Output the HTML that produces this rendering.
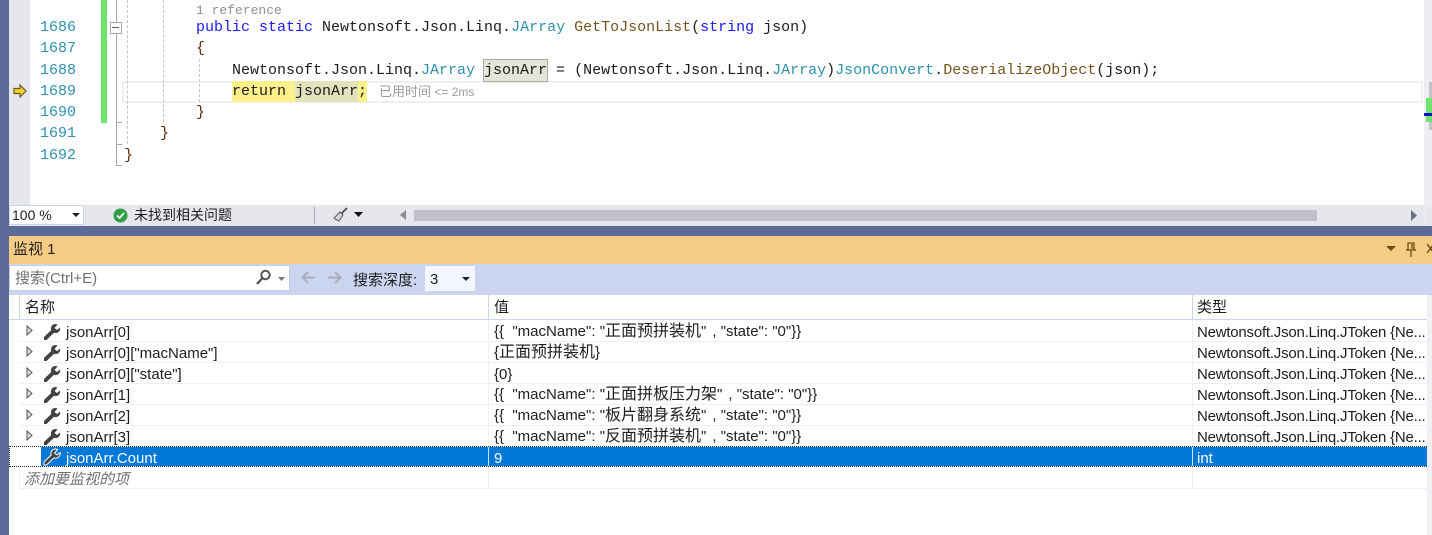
<!DOCTYPE html>
<html><head><meta charset="utf-8">
<style>
html,body{margin:0;padding:0;width:1432px;height:535px;overflow:hidden;background:#fff}
#r{position:relative;width:1432px;height:535px;overflow:hidden;font-family:"Liberation Sans","Noto Sans CJK SC",sans-serif}
#r div,#r span.a,#r svg{position:absolute}
.m{font-family:"Liberation Mono",monospace;font-size:15px;line-height:21px;white-space:pre;color:#1c1c1c}
.n{color:#2b91af;left:40px}
.k{color:#1a1aff}.t{color:#2b91af}.f{color:#74531f}.b{color:#5a2a0c}
.s{font-size:15px;line-height:21px;white-space:pre;color:#1e1e1e}
.s i{font-style:normal;font-size:16px;letter-spacing:0}
.s u{text-decoration:none;display:inline-block;width:6px}
.y{letter-spacing:-.22px}
.l{left:20px;width:1407px;height:1px;background:#eeeff2}
.dv{width:0;border-left:1px dashed #c4c4c4}
</style></head><body><div id="r">
<div style="left:0;top:0;width:9px;height:535px;background:#5c6a98"></div>
<div style="left:9px;top:0;width:21px;height:205px;background:#e6e7ec"></div>
<div style="left:1424px;top:0;width:8px;height:205px;background:#eeeef2"></div>
<div style="left:1429px;top:82px;width:3px;height:48px;background:#c2c3c9"></div>
<div style="left:1426px;top:98px;width:6px;height:24px;background:#6fe36f"></div>
<div style="left:1424px;top:113px;width:8px;height:3px;background:#1010c8"></div>

<!-- current line box -->
<div style="left:122px;top:81px;width:1297px;height:18px;border:2px solid #eeeef5"></div>
<div style="left:232px;top:81px;width:135px;height:21px;background:#fff08c"></div>
<div style="left:295px;top:81px;width:63px;height:21px;background:#e2e2bc"></div>
<div style="left:483px;top:59px;width:63px;height:21px;background:#e2e6d8;border:1px solid #a9ad9f"></div>

<!-- green bar & outlining -->
<div style="left:101px;top:0;width:6px;height:123px;background:#6fe36f"></div>
<div style="left:116px;top:0;width:1px;height:165px;background:#a8a8a8"></div>
<div style="left:116px;top:122px;width:6px;height:1px;background:#a8a8a8"></div>
<div style="left:116px;top:144px;width:6px;height:1px;background:#a8a8a8"></div>
<div style="left:116px;top:165px;width:6px;height:1px;background:#a8a8a8"></div>
<div style="left:110px;top:22px;width:10px;height:10px;background:#fff;border:1px solid #a8a8a8"></div>
<div style="left:112px;top:27px;width:7px;height:1px;background:#555"></div>
<div class="dv" style="left:127px;top:0;height:144px"></div>
<div class="dv" style="left:163px;top:0;height:122px"></div>
<div class="dv" style="left:199px;top:59px;height:43px"></div>

<!-- arrow -->
<svg style="left:13px;top:84px" width="14" height="14" viewBox="0 0 14 14"><path d="M1 4.5H7V1L13 7 7 13V9.5H1Z" fill="#f8d12f" stroke="#6b5a26" stroke-width="1.2"/></svg>

<!-- line numbers -->
<div class="m n" style="top:17px">1686</div>
<div class="m n" style="top:38px">1687</div>
<div class="m n" style="top:60px">1688</div>
<div class="m n" style="top:81px">1689</div>
<div class="m n" style="top:102px">1690</div>
<div class="m n" style="top:123px">1691</div>
<div class="m n" style="top:145px">1692</div>

<!-- code -->
<div class="m" style="left:196px;top:0;color:#8f8f8f;font-size:13px">1 reference</div>
<div class="m" style="left:196px;top:17px"><span class="k">public static</span> Newtonsoft.Json.Linq.<span class="t">JArray</span> <span class="f">GetToJsonList</span>(<span class="k">string</span> json)</div>
<div class="m b" style="left:196px;top:38px">{</div>
<div class="m" style="left:232px;top:60px">Newtonsoft.Json.Linq.<span class="t">JArray</span> jsonArr = (Newtonsoft.Json.Linq.<span class="t">JArray</span>)<span class="t">JsonConvert</span>.<span class="f">DeserializeObject</span>(json);</div>
<div class="m" style="left:232px;top:81px"><span class="k" style="color:#1c1c1c">return</span> jsonArr;</div>
<div class="s" style="left:379px;top:81px;color:#9a9a9a;font-size:12px"><i style="font-size:13px">已用时间</i> &lt;= 2ms</div>
<div class="m b" style="left:196px;top:102px">}</div>
<div class="m b" style="left:160px;top:123px">}</div>
<div class="m b" style="left:124px;top:145px">}</div>

<!-- status bar -->
<div style="left:9px;top:205px;width:1423px;height:21px;background:#e6e7ed"></div>
<div style="left:9px;top:205px;width:75px;height:20px;background:#fff;border:1px solid #ccd5f0;box-sizing:border-box"></div>
<div class="s" style="left:12px;top:205px;font-size:14px">100 %</div>
<svg style="left:72px;top:213px" width="8" height="5"><path d="M0 0H8L4 4Z" fill="#222"/></svg>
<svg style="left:113px;top:208px" width="15" height="15" viewBox="0 0 15 15"><circle cx="7.5" cy="7.5" r="7" fill="#2f9e44"/><path d="M4 7.5 6.6 10 11 5" fill="none" stroke="#fff" stroke-width="1.8"/></svg>
<div class="s" style="left:134px;top:205px;font-size:14px">未找到相关问题</div>
<div style="left:314px;top:207px;width:1px;height:17px;background:#a8a8b0"></div>
<svg style="left:333px;top:207px" width="16" height="16" viewBox="0 0 16 16"><path d="M14 1 8 7" stroke="#444" stroke-width="1.6"/><path d="M7 5 10 8 6 14 2 12 1 11Z" fill="#d8d8d8" stroke="#555"/></svg>
<svg style="left:354px;top:212px" width="9" height="6"><path d="M0 0H9L4.5 5Z" fill="#111"/></svg>
<svg style="left:400px;top:210px" width="6" height="11"><path d="M6 0V10L0 5Z" fill="#8b8c95"/></svg>
<div style="left:414px;top:210px;width:903px;height:11px;background:#c0c1c8"></div>
<svg style="left:1411px;top:210px" width="7" height="11"><path d="M0 0V11L6 5.500Z" fill="#6d7080"/></svg>
<div style="left:1424px;top:205px;width:1px;height:21px;background:#eeeef2"></div>

<!-- blue band -->
<div style="left:9px;top:226px;width:1423px;height:10px;background:#5c6a98"></div>
<!-- orange header -->
<div style="left:9px;top:236px;width:1423px;height:28px;background:#f5cc84"></div>
<div class="s" style="left:13px;top:239px;font-size:15px;color:#222">监视 1</div>
<svg style="left:1386px;top:246px" width="10" height="6"><path d="M0 0H10L5 5Z" fill="#6b4e16"/></svg>
<svg style="left:1406px;top:242px" width="10" height="15" viewBox="0 0 10 15"><path d="M2 1H8V8H2ZM0 8H10M5 8V15M6 2V7" fill="none" stroke="#6b4e16" stroke-width="1.3"/></svg>
<svg style="left:1427px;top:243px" width="5" height="11"><path d="M0 1 7 10M7 1 0 10" stroke="#6b4e16" stroke-width="1.4"/></svg>

<!-- toolbar -->
<div style="left:9px;top:264px;width:1423px;height:31px;background:#ccd5f0"></div>
<div style="left:9px;top:265px;width:281px;height:26px;background:#fff;border:1px solid #c4cee8;box-sizing:border-box"></div>
<div class="s" style="left:15px;top:268px;color:#717171;font-size:15px;line-height:22px">搜索(Ctrl+E)</div>
<svg style="left:255px;top:269px" width="17" height="17" viewBox="0 0 17 17"><circle cx="10.5" cy="6" r="4.2" fill="none" stroke="#555" stroke-width="2"/><path d="M7.5 9 2 15" stroke="#555" stroke-width="2.4"/></svg>
<svg style="left:278px;top:277px" width="7" height="4"><path d="M0 0H7L3.500 4Z" fill="#777"/></svg>
<svg style="left:301px;top:271px" width="15" height="13" viewBox="0 0 15 13"><path d="M14 6.500H2M7 1 1.500 6.500 7 12" fill="none" stroke="#a9aebd" stroke-width="2"/></svg>
<svg style="left:327px;top:271px" width="15" height="13" viewBox="0 0 15 13"><path d="M1 6.500H13M8 1 13.500 6.500 8 12" fill="none" stroke="#a9aebd" stroke-width="2"/></svg>
<div class="s" style="left:353px;top:270px;font-size:15px">搜索深度:</div>
<div style="left:425px;top:266px;width:50px;height:25px;background:#f3f6fe"></div>
<div class="s" style="left:430px;top:269px">3</div>
<svg style="left:462px;top:277px" width="8" height="5"><path d="M0 0H8L4 4Z" fill="#222"/></svg>

<!-- grid -->
<div style="left:9px;top:295px;width:1418px;height:240px;background:#fff"></div>
<div style="left:1427px;top:295px;width:5px;height:240px;background:#f0f0f4"></div>
<div style="left:9px;top:319px;width:1418px;height:1px;background:#ccd5f0"></div>
<div style="left:19px;top:295px;width:1px;height:24px;background:#ccd5f0"></div>
<div style="left:488px;top:295px;width:1px;height:24px;background:#ccd5f0"></div>
<div style="left:1192px;top:295px;width:1px;height:24px;background:#ccd5f0"></div>
<div class="s" style="left:25px;top:297px;font-size:15px">名称</div>
<div class="s" style="left:494px;top:297px;font-size:15px">值</div>
<div class="s" style="left:1197px;top:297px;font-size:15px">类型</div>

<div class="l" style="top:341px"></div>
<div class="l" style="top:362px"></div>
<div class="l" style="top:383px"></div>
<div class="l" style="top:404px"></div>
<div class="l" style="top:425px"></div>
<div class="l" style="top:488px"></div>
<div style="left:488px;top:320px;width:1px;height:169px;background:#eeeff2"></div>
<div style="left:1192px;top:320px;width:1px;height:169px;background:#eeeff2"></div>
<div style="left:19px;top:467px;width:1px;height:21px;background:#eeeff2"></div>

<!-- selected row -->
<div style="left:9px;top:446px;width:1418px;height:21px;border-top:1px dotted #222;border-bottom:1px dotted #222;box-sizing:border-box"></div>
<div style="left:9px;top:446px;width:1px;height:21px;border-left:1px dotted #222"></div>
<div style="left:41px;top:447px;width:1386px;height:19px;background:#0078d7"></div>
<div style="left:488px;top:447px;width:1px;height:19px;background:#cde4f7"></div>
<div style="left:1192px;top:447px;width:1px;height:19px;background:#cde4f7"></div>

<!-- expanders -->
<svg style="left:26px;top:325px" width="7" height="11"><path d="M1 1V10L6 5.500Z" fill="#ddd" stroke="#555"/></svg>
<svg style="left:26px;top:346px" width="7" height="11"><path d="M1 1V10L6 5.500Z" fill="#ddd" stroke="#555"/></svg>
<svg style="left:26px;top:367px" width="7" height="11"><path d="M1 1V10L6 5.500Z" fill="#ddd" stroke="#555"/></svg>
<svg style="left:26px;top:388px" width="7" height="11"><path d="M1 1V10L6 5.500Z" fill="#ddd" stroke="#555"/></svg>
<svg style="left:26px;top:409px" width="7" height="11"><path d="M1 1V10L6 5.500Z" fill="#ddd" stroke="#555"/></svg>
<svg style="left:26px;top:430px" width="7" height="11"><path d="M1 1V10L6 5.500Z" fill="#ddd" stroke="#555"/></svg>

<!-- wrench icons -->
<svg style="left:43px;top:323px" width="18" height="18" viewBox="0 0 18 18"><path d="M13 1A4.500 4.500 0 0 0 8.200 7L1 14V17H3.500L11 9.800A4.500 4.500 0 0 0 17 4.500L14 7 11.500 5 14.500 1.500Z" fill="#424242"/></svg>
<svg style="left:43px;top:344px" width="18" height="18" viewBox="0 0 18 18"><path d="M13 1A4.500 4.500 0 0 0 8.200 7L1 14V17H3.500L11 9.800A4.500 4.500 0 0 0 17 4.500L14 7 11.500 5 14.500 1.500Z" fill="#424242"/></svg>
<svg style="left:43px;top:365px" width="18" height="18" viewBox="0 0 18 18"><path d="M13 1A4.500 4.500 0 0 0 8.200 7L1 14V17H3.500L11 9.800A4.500 4.500 0 0 0 17 4.500L14 7 11.500 5 14.500 1.500Z" fill="#424242"/></svg>
<svg style="left:43px;top:386px" width="18" height="18" viewBox="0 0 18 18"><path d="M13 1A4.500 4.500 0 0 0 8.200 7L1 14V17H3.500L11 9.800A4.500 4.500 0 0 0 17 4.500L14 7 11.500 5 14.500 1.500Z" fill="#424242"/></svg>
<svg style="left:43px;top:407px" width="18" height="18" viewBox="0 0 18 18"><path d="M13 1A4.500 4.500 0 0 0 8.200 7L1 14V17H3.500L11 9.800A4.500 4.500 0 0 0 17 4.500L14 7 11.500 5 14.500 1.500Z" fill="#424242"/></svg>
<svg style="left:43px;top:428px" width="18" height="18" viewBox="0 0 18 18"><path d="M13 1A4.500 4.500 0 0 0 8.200 7L1 14V17H3.500L11 9.800A4.500 4.500 0 0 0 17 4.500L14 7 11.500 5 14.500 1.500Z" fill="#424242"/></svg>
<svg style="left:43px;top:448px" width="18" height="18" viewBox="0 0 18 18"><path d="M13 1A4.500 4.500 0 0 0 8.200 7L1 14V17H3.500L11 9.800A4.500 4.500 0 0 0 17 4.500L14 7 11.500 5 14.500 1.500Z" fill="#424242" stroke="#fff" stroke-width="1"/></svg>

<!-- names -->
<div class="s" style="left:66px;top:322px">jsonArr[0]</div>
<div class="s" style="left:66px;top:343px">jsonArr[0]["macName"]</div>
<div class="s" style="left:66px;top:364px">jsonArr[0]["state"]</div>
<div class="s" style="left:66px;top:385px">jsonArr[1]</div>
<div class="s" style="left:66px;top:406px">jsonArr[2]</div>
<div class="s" style="left:66px;top:427px">jsonArr[3]</div>
<div class="s" style="left:66px;top:448px;color:#fff">jsonArr.Count</div>
<div class="s" style="left:24px;top:469px;color:#717171;font-style:italic;font-size:15px">添加要监视的项</div>

<!-- values -->
<div class="s" style="left:494px;top:321px">{{  "macName": "<i>正面预拼装机</i>"<u></u>, "state": "0"}}</div>
<div class="s" style="left:494px;top:342px">{<i>正面预拼装机</i>}</div>
<div class="s" style="left:494px;top:364px">{0}</div>
<div class="s" style="left:494px;top:384px">{{  "macName": "<i>正面拼板压力架</i>"<u></u>, "state": "0"}}</div>
<div class="s" style="left:494px;top:405px">{{  "macName": "<i>板片翻身系统</i>"<u></u>, "state": "0"}}</div>
<div class="s" style="left:494px;top:426px">{{  "macName": "<i>反面预拼装机</i>"<u></u>, "state": "0"}}</div>
<div class="s" style="left:494px;top:448px;color:#fff">9</div>

<!-- types -->
<div class="s y" style="left:1197px;top:322px">Newtonsoft.Json.Linq.JToken {Ne...</div>
<div class="s y" style="left:1197px;top:343px">Newtonsoft.Json.Linq.JToken {Ne...</div>
<div class="s y" style="left:1197px;top:364px">Newtonsoft.Json.Linq.JToken {Ne...</div>
<div class="s y" style="left:1197px;top:385px">Newtonsoft.Json.Linq.JToken {Ne...</div>
<div class="s y" style="left:1197px;top:406px">Newtonsoft.Json.Linq.JToken {Ne...</div>
<div class="s y" style="left:1197px;top:427px">Newtonsoft.Json.Linq.JToken {Ne...</div>
<div class="s" style="left:1197px;top:448px;color:#fff">int</div>
</div></body></html>
